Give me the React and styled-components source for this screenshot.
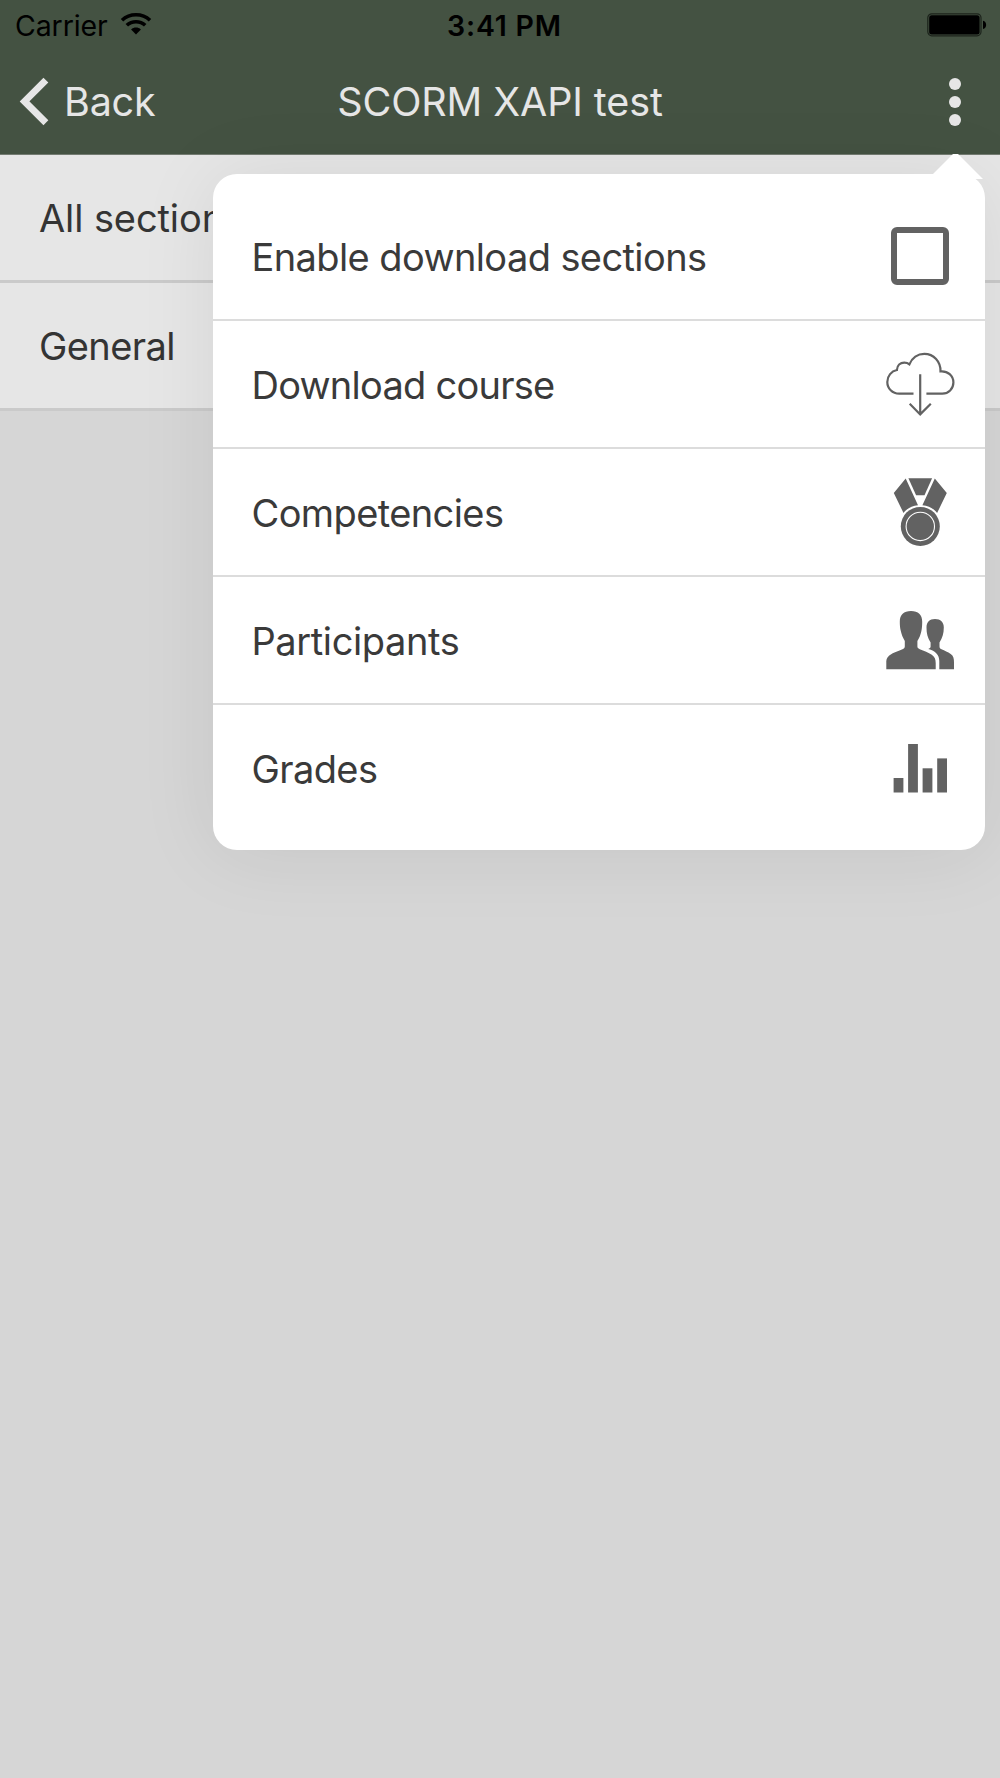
import React from 'react';
import styled, { createGlobalStyle } from 'styled-components';

const sections = [
    { label: 'All sections', spacing: '-0.1px' },
    { label: 'General', spacing: '-0.6px' },
];

const menuItems = [
    { label: 'Enable download sections', icon: 'checkbox', spacing: '-0.6px' },
    { label: 'Download course', icon: 'cloud', spacing: '-0.75px' },
    { label: 'Competencies', icon: 'medal', spacing: '-0.6px' },
    { label: 'Participants', icon: 'people', spacing: '-0.4px' },
    { label: 'Grades', icon: 'stats', spacing: '-0.6px' },
];

function MenuIcon({ name }) {
    if (name === 'checkbox') {
        return <IconSlot><Checkbox /></IconSlot>;
    }

    return (
        <IconSlot>
            <svg width="80" height="80" viewBox="0 0 80 80" fill="#626262">
                {name === 'cloud' &&
                    <g fill="none" stroke="#626262" strokeWidth="2.2">
                        <path d="M33.5 49.7H19.2C12.4 49.7 7.3 44.5 7.3 38C7.3 31.7 11.5 27.2 16.9 26C17.2 21.6 20.2 18.6 24.3 18.6C26.3 18.6 28 19.1 29.4 20.3C32 14 37.7 9.8 44.3 9.8C53.7 9.8 60.9 17.5 60.5 27.4C67.8 26.7 73.4 31.8 73.4 38.5C73.4 44.9 68.5 49.7 62.3 49.7H46.4" />
                        <path d="M40.2 30.2V70.5M29.7 59.8L40.2 70.4L50.8 59.8" />
                    </g>
                }
                {name === 'medal' &&
                    <>
                        <path d="M25.7 6.6L13.8 20.9L23.5 41C26.6 36.8 31.8 33.8 38 33.2Z" />
                        <path d="M28.4 6.3H52.1L44.5 23.2H36.1Z" />
                        <path d="M54.8 6.6L66.8 20.9L57.1 41C54 36.8 48.8 33.8 42.4 33.2Z" />
                        <circle cx="40.3" cy="54.4" r="19.5" />
                        <circle cx="40.3" cy="54.4" r="14.2" fill="none" stroke="#fff" strokeWidth="1.1" />
                    </>
                }
                {name === 'people' &&
                    <>
                        <path d="M31 11C23.8 11 19.8 15 19.8 21.5C19.8 25 20 28 20.8 31C21.6 35 23.2 38 24.8 41V46.5C24.6 48 24 48.5 22.5 49.2C17.5 51.2 13.5 52.5 10 55C7 57.4 6.3 59 6.3 63V69.2H55.7V63C55.7 59.3 54.8 57 51.8 54.7C48.5 52.3 44 51 39.8 49.2C38 48.4 37.4 47.8 37.4 46.5V41C39.2 38 40.6 35 41.4 31C42 28 42.2 25 42.2 21.5C42.2 15 38.2 11 31 11Z" />
                        <path d="M55 19C49.4 19 46.5 22.2 46.5 27.5C46.5 33.5 47.6 38 50.6 42.5V46.5C50.5 48 49.7 48.3 48.3 49C55.5 50.7 59.3 55 59.3 61V69.2H74V62.5C74 58.5 73.5 56 70.7 54C67.8 52 64.8 50.8 61.5 49.3C60 48.6 59.6 48 59.5 46.5V42.5C62.4 38 63.8 33.5 63.8 27.5C63.8 22.2 60.6 19 55 19Z" />
                    </>
                }
                {name === 'stats' &&
                    <>
                        <rect x="13.6" y="50" width="9.8" height="14.5" />
                        <rect x="28.1" y="16" width="9.8" height="48.5" />
                        <rect x="42.6" y="40.3" width="9.8" height="24.2" />
                        <rect x="57.2" y="30.4" width="9.8" height="34.1" />
                    </>
                }
            </svg>
        </IconSlot>
    );
}

function StatusBar() {
    return (
        <StatusRow>
            <Carrier>
                <CarrierName>Carrier</CarrierName>
                <svg width="32" height="24" viewBox="0 0 32 24">
                    <g fill="none" stroke="#000" strokeWidth="3.6">
                        <path d="M2 8.2C9.8 .9 22.2 .9 30 8.2" />
                        <path d="M6.8 13.3C11.9 8.5 20.1 8.5 25.2 13.3" />
                    </g>
                    <path d="M16 22.6L11.1 17.5C13.9 14.9 18.1 14.9 20.9 17.5Z" />
                </svg>
            </Carrier>
            <Clock>3:41 PM</Clock>
            <Battery>
                <svg width="60" height="24" viewBox="0 0 60 24">
                    <rect x=".8" y=".8" width="53.2" height="22" rx="4" fill="none" stroke="#1c231b" strokeWidth="1.2" />
                    <rect x="2.2" y="2.2" width="50.4" height="19.2" rx="2.5" />
                    <path d="M56 7.8C60.2 8.9 60.2 14.9 56 16Z" />
                </svg>
            </Battery>
        </StatusRow>
    );
}

function App() {
    return (
        <Screen>
            <GlobalStyle />
            <Header>
                <StatusBar />
                <NavBar>
                    <BackButton>
                        <svg width="30" height="50" viewBox="0 0 30 50">
                            <path d="M26.9 3.1L5.6 24.4L26.9 45.7" fill="none" stroke="#e6e6e6" strokeWidth="6.9" />
                        </svg>
                        <BackLabel>Back</BackLabel>
                    </BackButton>
                    <Title>SCORM XAPI test</Title>
                    <MoreButton>
                        <Dot />
                        <Dot />
                        <Dot />
                    </MoreButton>
                </NavBar>
            </Header>
            {sections.map(section => (
                <Section key={section.label} $spacing={section.spacing}>{section.label}</Section>
            ))}
            <Popover>
                <Arrow />
                {menuItems.map(item => (
                    <MenuItem key={item.label}>
                        <MenuLabel $spacing={item.spacing}>{item.label}</MenuLabel>
                        <MenuIcon name={item.icon} />
                    </MenuItem>
                ))}
            </Popover>
        </Screen>
    );
}

export default App;

const GlobalStyle = createGlobalStyle`
    * {
        box-sizing: border-box;
    }

    body {
        margin: 0;
        background: #d6d6d6;
        font-family: Inter, "Liberation Sans", sans-serif;
    }
`;

const Screen = styled.div`
    position: relative;
    width: 1000px;
    height: 1778px;
    overflow: hidden;
    background: #d6d6d6;
`;

const Header = styled.header`
    height: 155px;
    background: #445242;
    border-bottom: 1px solid #737b71;
`;

const StatusRow = styled.div`
    display: grid;
    grid-template-columns: 1fr auto 1fr;
    height: 51px;
    padding: 0 13px 0 15px;
    line-height: 51px;
    font-size: 28.5px;
    color: #000;
`;

const Carrier = styled.div`
    display: flex;
    gap: 12px;

    svg {
        margin-top: 12px;
    }
`;

const CarrierName = styled.span`
    width: 93px;
    letter-spacing: -0.1px;
    white-space: nowrap;
`;

const Clock = styled.span`
    padding-left: 7px;
    font-weight: 600;
    letter-spacing: 0.8px;
    white-space: nowrap;
`;

const Battery = styled.div`
    display: flex;
    justify-content: flex-end;

    svg {
        margin-top: 13px;
    }
`;

const NavBar = styled.div`
    display: grid;
    grid-template-columns: 1fr auto 1fr;
    align-items: center;
    height: 101px;
    padding: 0 39px;
    color: #e6e6e6;
    font-size: 39.5px;
`;

const BackButton = styled.div`
    display: flex;
    align-items: center;
    gap: 15px;
    margin-left: -20px;
`;

const BackLabel = styled.span`
    letter-spacing: -0.2px;
`;

const Title = styled.h1`
    margin: 0;
    font-size: 39.5px;
    font-weight: 400;
    letter-spacing: -0.1px;
    white-space: nowrap;
`;

const MoreButton = styled.div`
    display: flex;
    flex-direction: column;
    align-items: flex-end;
    gap: 6px;
`;

const Dot = styled.span`
    width: 12px;
    height: 12px;
    border-radius: 50%;
    background: #e6e6e6;
`;

const Section = styled.div`
    display: flex;
    align-items: center;
    height: 128px;
    padding: 1px 0 0 39px;
    background: #e6e6e6;
    border-bottom: 3px solid #cacaca;
    color: #343434;
    font-size: 38px;
    letter-spacing: ${props => props.$spacing};
`;

const Popover = styled.div`
    position: absolute;
    top: 174px;
    left: 212.5px;
    width: 772.5px;
    height: 676px;
    padding-top: 19px;
    border-radius: 24px;
    background: #fff;
    box-shadow: 0 3px 80px rgba(0, 0, 0, .08);
`;

/* pointer towards the three dots */
const Arrow = styled.span`
    position: absolute;
    top: -20px;
    left: 715.5px;
    width: 55px;
    height: 25px;
    background: #fff;
    clip-path: polygon(25px 0, 30px 0, 55px 25px, 0 25px);
`;

const MenuItem = styled.div`
    display: flex;
    align-items: center;
    justify-content: space-between;
    height: 128px;
    padding: 0 25px 0 39px;
    border-bottom: 2px solid #dcdcdc;

    &:last-child {
        border-bottom-color: transparent;
    }
`;

const MenuLabel = styled.span`
    padding-top: 2px;
    color: #3a3a3a;
    font-size: 38px;
    letter-spacing: ${props => props.$spacing};
    white-space: nowrap;
`;

const IconSlot = styled.span`
    display: flex;
    align-items: center;
    justify-content: center;
    width: 80px;
    height: 80px;
`;

const Checkbox = styled.span`
    width: 58px;
    height: 58px;
    border: 6px solid #626262;
    border-radius: 6px;
`;
